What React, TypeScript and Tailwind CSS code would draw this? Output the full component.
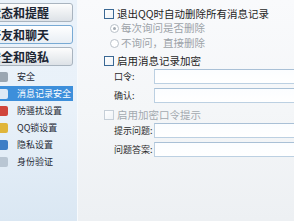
const navButtons = [
  { label: "基本设置", active: false },
  { label: "状态和提醒", active: false },
  { label: "好友和聊天", active: true },
  { label: "安全和隐私", active: false },
];

const navItems = [
  { label: "安全", icon: "bg-[#9aa6b2]", selected: false },
  { label: "消息记录安全", icon: "bg-[#dfe9f5]", selected: true },
  { label: "防骚扰设置", icon: "bg-[#d0453c]", selected: false },
  { label: "QQ锁设置", icon: "bg-[#e0b53a]", selected: false },
  { label: "隐私设置", icon: "bg-[#3f7fc6]", selected: false },
  { label: "身份验证", icon: "bg-[#b9c6d3]", selected: false },
];

function Checkbox({ disabled }: { disabled?: boolean }) {
  return (
    <span
      className={`block w-[10px] h-[10px] shrink-0 border bg-gradient-to-br from-white to-[#eef2f6] ${
        disabled ? "border-[#c6cfd8]" : "border-[#3a6894]"
      }`}
    />
  );
}

function Radio({ checked }: { checked?: boolean }) {
  return (
    <span className="flex items-center justify-center w-[9px] h-[9px] shrink-0 rounded-full border border-[#b9c1c9] bg-white">
      {checked && <span className="block w-[3px] h-[3px] rounded-full bg-[#a3abb3]" />}
    </span>
  );
}

function Field({ label, className }: { label: string; className: string }) {
  return (
    <div className={`flex items-center h-[15px] ${className}`}>
      <span className="w-[50px] pl-[10px] shrink-0 whitespace-nowrap text-[9px] text-[#2a2a2a]">{label}</span>
      <span className="block h-[15px] w-[150px] shrink-0 border border-[#bcd0e2] border-t-[#a9c0d6] bg-gradient-to-b from-[#fbfdff] to-white" />
    </div>
  );
}

export default function App() {
  return (
    <div className="flex w-[294px] h-[221px] overflow-hidden leading-none font-['Noto_Sans_CJK_SC','Noto_Sans',sans-serif]">
      {/* Sidebar */}
      <aside className="w-[78px] shrink-0 overflow-hidden border-r border-[#f7fafd] bg-gradient-to-b from-[#eaf2fa] via-[#e9f1f9] to-[#dae7f3]">
        <div className="flex flex-col gap-[3px] -mt-[19px]">
          {navButtons.map((b) => (
            <div
              key={b.label}
              className={`flex items-center justify-center h-[19px] w-[108px] -ml-[35px] rounded-[3px] border text-[12px] font-bold text-[#1c2633] whitespace-nowrap ${
                b.active
                  ? "border-[#78aad4] bg-gradient-to-b from-white to-[#e8eef4]"
                  : "border-[#a9b4bf] bg-gradient-to-b from-[#fdfdfd] to-[#dde2e7]"
              }`}
            >
              {b.label}
            </div>
          ))}
        </div>

        <div className="flex flex-col mt-[2px] text-[9px]">
          {navItems.map((item) => (
            <div key={item.label} className="h-[17px] w-[73px] flex items-center">
              <div
                className={`flex items-center gap-[9px] w-full h-[15px] whitespace-nowrap ${
                  item.selected ? "bg-[#3d8fdb] text-white" : "text-[#1f2a36]"
                }`}
              >
                <span className={`block w-[10px] h-[10px] -ml-[2px] rounded-[2px] ${item.icon}`} />
                <span>{item.label}</span>
              </div>
            </div>
          ))}
        </div>
      </aside>

      {/* Main panel */}
      <main className="flex-1 overflow-hidden flex flex-col pt-[7px] pl-[26px] bg-gradient-to-b from-[#f9fafc] via-[#f4f6f8] to-[#edf0f3] text-[10.5px] text-[#1e1e1e] whitespace-nowrap">
        <div className="flex items-center gap-[3px] h-[14px]">
          <Checkbox />
          <span>退出QQ时自动删除所有消息记录</span>
        </div>
        <div className="flex items-center gap-[2px] h-[15px] pl-[6px] text-[#9ca2a8]">
          <Radio checked />
          <span>每次询问是否删除</span>
        </div>
        <div className="flex items-center gap-[2px] h-[14px] pl-[6px] text-[#9ca2a8]">
          <Radio />
          <span>不询问，直接删除</span>
        </div>
        <div className="flex items-center gap-[3px] h-[14px] mt-[4px]">
          <Checkbox />
          <span>启用消息记录加密</span>
        </div>
        <Field label="口令:" className="mt-[1px]" />
        <Field label="确认:" className="mt-[4px]" />
        <div className="flex items-center gap-[3px] h-[14px] mt-[5px] text-[#a3a9af]">
          <Checkbox disabled />
          <span>启用加密口令提示</span>
        </div>
        <Field label="提示问题:" className="mt-[1px]" />
        <Field label="问题答案:" className="mt-[4px]" />
      </main>
    </div>
  );
}
